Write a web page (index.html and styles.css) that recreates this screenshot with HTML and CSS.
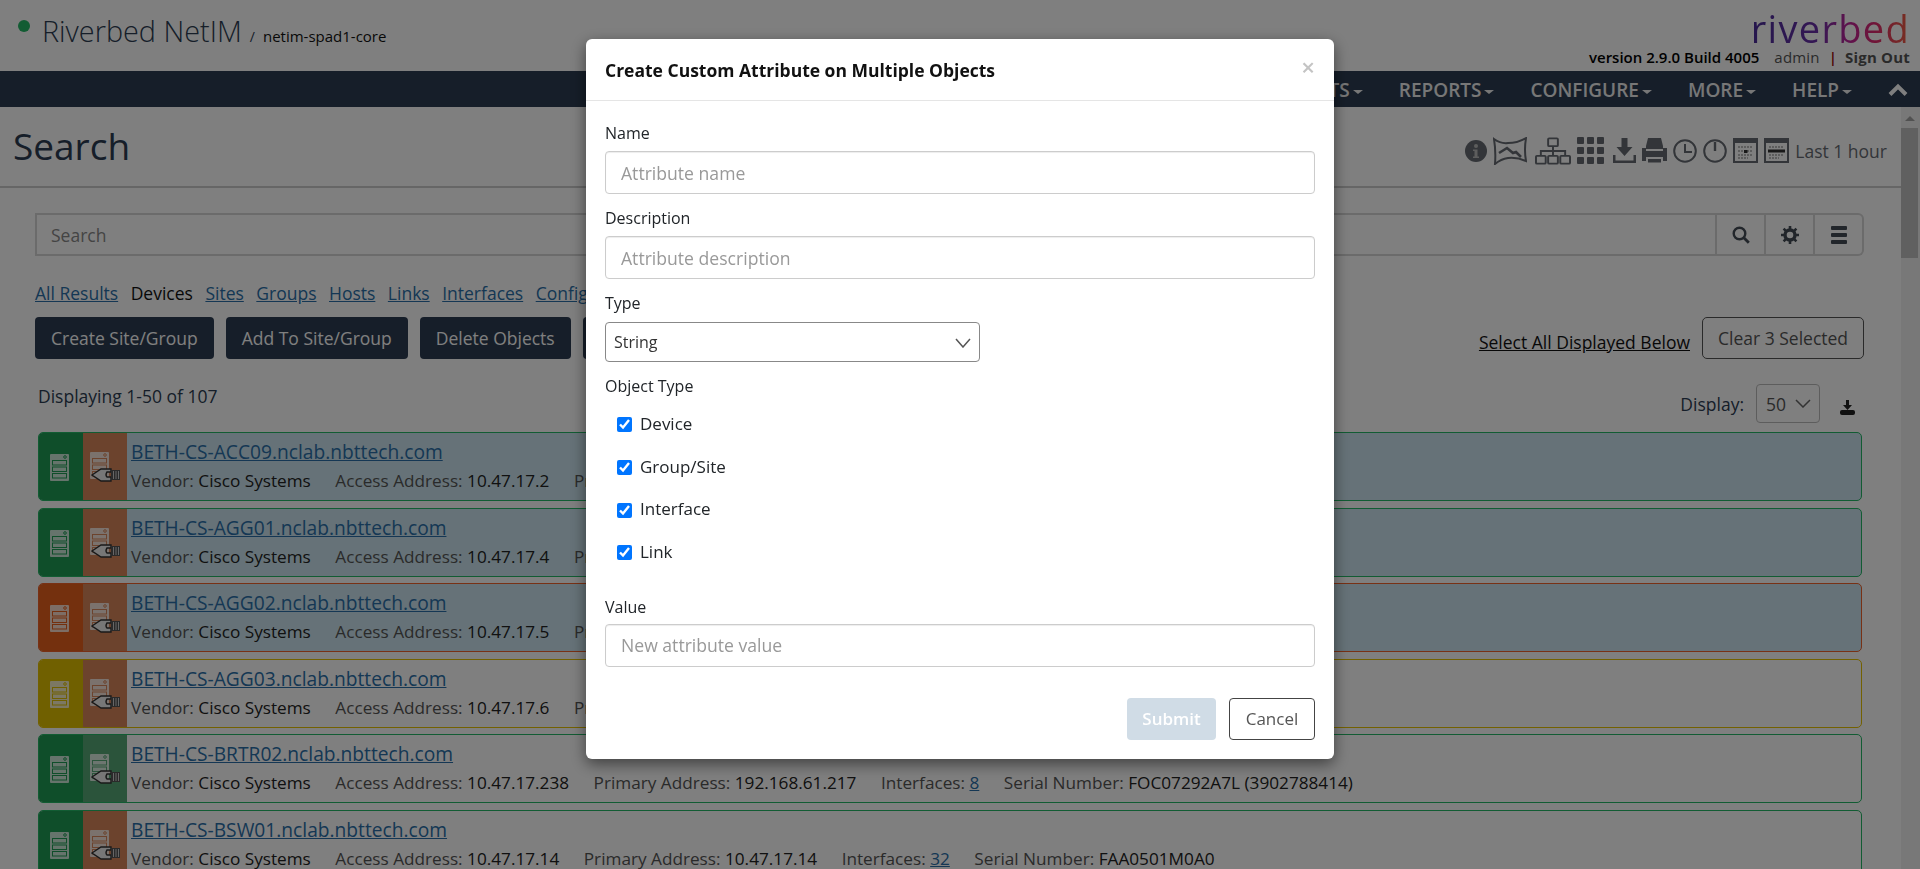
FILE: index.html
```html
<!DOCTYPE html>
<html lang="en">
<head>
    <meta charset="UTF-8">
    <title>Riverbed NetIM - Search</title>
    <link rel="stylesheet" href="styles.css">
</head>
<body>
    <svg class="sprites" width="0" height="0">
        <symbol id="server" viewBox="0 0 19 27">
            <rect width="19" height="27" rx="1" fill="#fff" fill-opacity=".78"/>
            <rect x="2.500" y="6.500" width="14" height="4.500" fill="none" stroke="currentColor"/>
            <rect x="2.500" y="13" width="14" height="4.500" fill="none" stroke="currentColor"/>
            <rect x="2.500" y="19.500" width="14" height="4.500" fill="none" stroke="currentColor"/>
            <circle cx="15" cy="3" r="1.300" fill="none" stroke="currentColor"/>
        </symbol>
        <symbol id="plug" viewBox="0 0 30 14">
            <path d="M1 7 L10 1 H20 V4 H16 Q14 7 16 9 H20 V13 H10 Z" fill="#eee" stroke="#333" stroke-width="1.400"/>
            <rect x="20" y="2" width="9" height="10" fill="#555"/>
            <path d="M22.500 3 V11 M25 3 V11 M27.500 3 V11" stroke="#ccc" stroke-width="1"/>
        </symbol>
    </svg>

    <header class="top-header">
        <div class="brand">
            <span class="status-dot"></span>
            <span class="brand-name">Riverbed NetIM</span>
            <span class="brand-sep">/</span>
            <span class="brand-host">netim-spad1-core</span>
        </div>
        <div class="user-box">
            <div class="logo">riverbed</div>
            <div class="user-line">
                <span class="version">version 2.9.0 Build 4005</span>
                <span class="user">admin</span>
                <span class="pipe">|</span>
                <a class="sign-out">Sign Out</a>
            </div>
        </div>
    </header>

    <nav class="main-nav">
        <a class="nav-item">ALERTS<i class="caret"></i></a>
        <a class="nav-item">REPORTS<i class="caret"></i></a>
        <a class="nav-item">CONFIGURE<i class="caret"></i></a>
        <a class="nav-item">MORE<i class="caret"></i></a>
        <a class="nav-item">HELP<i class="caret"></i></a>
        <svg class="nav-up" width="20" height="14" viewBox="0 0 20 14"><path d="M2 11.500 L10 3.500 L18 11.500" fill="none" stroke="#fff" stroke-width="4"/></svg>
    </nav>

    <div class="page-wrap">
        <main class="content">
            <div class="title-bar">
                <h1>Search</h1>
                <div class="tools">
                    <svg class="tool" width="22" height="22" viewBox="0 0 22 22"><circle cx="11" cy="11" r="11" fill="#666b72"/><circle cx="11" cy="6" r="2" fill="#bbb"/><path d="M8 9.500h4.500v7H14V18H8v-1.500h1.500V11H8z" fill="#bbb"/></svg>
                    <svg class="tool tool-map" width="34" height="28" viewBox="0 0 34 28"><path d="M1 2 Q8 7 15 6 Q24 6 33 1 Q31 13 33 24 Q24 20 15 21 Q8 22 2 27 Q3 14 1 2 Z" fill="none" stroke="#666b72" stroke-width="2"/><path d="M6 16 L14 11 L20 16 L23 15 L28 20" fill="none" stroke="#666b72" stroke-width="2.600"/></svg>
                    <svg class="tool" width="36" height="28" viewBox="0 0 37 28"><g fill="none" stroke="#666b72" stroke-width="2"><rect x="13.500" y="1" width="10" height="8" rx="1"/><rect x="1" y="19" width="10" height="8" rx="1"/><rect x="13.500" y="19" width="10" height="8" rx="1"/><rect x="26" y="19" width="10" height="8" rx="1"/><path d="M18.500 9v10M6 19v-5h25v5"/></g></svg>
                    <svg class="tool" width="27" height="27" viewBox="0 0 27 27"><g fill="#666b72"><rect width="7" height="7" rx="1"/><rect x="10" width="7" height="7" rx="1"/><rect x="20" width="7" height="7" rx="1"/><rect y="10" width="7" height="7" rx="1"/><rect x="10" y="10" width="7" height="7" rx="1"/><rect x="20" y="10" width="7" height="7" rx="1"/><rect y="20" width="7" height="7" rx="1"/><rect x="10" y="20" width="7" height="7" rx="1"/><rect x="20" y="20" width="7" height="7" rx="1"/></g></svg>
                    <svg class="tool tool-dl" width="23" height="25" viewBox="0 0 23 25"><path d="M8.500 0h6v9h5l-8 9-8-9h5z" fill="#666b72"/><path d="M0 17v8h23v-8h-2.500v5.500h-18V17z" fill="#666b72"/></svg>
                    <svg class="tool" width="25" height="25" viewBox="0 0 25 25"><path d="M6 0h13l2 8v3H4V8z" fill="#666b72"/><path d="M0 10h4v3h17v-3h4v13h-4v-4H4v4H0z" fill="#666b72"/><rect x="6" y="21" width="13" height="3.500" fill="#666b72"/></svg>
                    <svg class="tool" width="24" height="24" viewBox="0 0 24 24"><circle cx="12" cy="12" r="10.800" fill="none" stroke="#666b72" stroke-width="2"/><path d="M12 5v8h7" fill="none" stroke="#666b72" stroke-width="2"/></svg>
                    <svg class="tool" width="24" height="24" viewBox="0 0 24 24"><circle cx="12" cy="12" r="10.800" fill="none" stroke="#666b72" stroke-width="2"/><path d="M12 3v9" fill="none" stroke="#666b72" stroke-width="2.400"/></svg>
                    <svg class="tool" width="25" height="25" viewBox="0 0 25 25"><rect x="1" y="1" width="23" height="23" fill="none" stroke="#666b72" stroke-width="2"/><rect x="1" y="1" width="23" height="4" fill="#666b72"/><path d="M5 9h15M5 13h15M5 17h15M5 20h10" stroke="#bbb" stroke-width="2" stroke-dasharray="2 1"/><rect x="11" y="12" width="3.500" height="3" fill="#333"/></svg>
                    <svg class="tool" width="25" height="25" viewBox="0 0 25 25"><rect x="1" y="1" width="23" height="23" fill="none" stroke="#666b72" stroke-width="2"/><rect x="1" y="1" width="23" height="4" fill="#666b72"/><path d="M5 9h15M5 17h15M5 20h10" stroke="#bbb" stroke-width="2" stroke-dasharray="2 1"/><path d="M4 13h17" stroke="#333" stroke-width="3"/></svg>
                    <span class="time-range">Last 1 hour</span>
                </div>
            </div>

            <div class="section">
                <div class="search-bar">
                    <input class="search-input" type="text" placeholder="Search">
                    <button class="search-btn"><svg width="18" height="18" viewBox="0 0 18 18"><circle cx="7.500" cy="7.500" r="5.800" fill="none" stroke="#444c56" stroke-width="2.400"/><path d="M11.800 11.800 L16.800 16.800" stroke="#444c56" stroke-width="2.800"/></svg></button>
                    <button class="search-btn"><svg width="18" height="18" viewBox="0 0 18 18"><circle cx="9" cy="9" r="5" fill="none" stroke="#444c56" stroke-width="3.400"/><path d="M9 0v4M9 14v4M0 9h4M14 9h4M2.600 2.600l3 3M12.400 12.400l3 3M15.400 2.600l-3 3M5.600 12.400l-3 3" stroke="#444c56" stroke-width="2.600"/></svg></button>
                    <button class="search-btn"><svg width="16" height="18" viewBox="0 0 16 18"><rect width="16" height="4" rx="1" fill="#444c56"/><rect y="7" width="16" height="4" rx="1" fill="#444c56"/><rect y="14" width="16" height="4" rx="1" fill="#444c56"/></svg></button>
                </div>

                <div class="tabs">
                    <a class="tab-link">All Results</a>
                    <span>Devices</span>
                    <a class="tab-link">Sites</a>
                    <a class="tab-link">Groups</a>
                    <a class="tab-link">Hosts</a>
                    <a class="tab-link">Links</a>
                    <a class="tab-link">Interfaces</a>
                    <a class="tab-link">Config</a>
                </div>

                <div class="actions">
                    <button class="btn-dark">Create Site/Group</button>
                    <button class="btn-dark">Add To Site/Group</button>
                    <button class="btn-dark">Delete Objects</button>
                    <button class="btn-dark">Edit Objects</button>
                    <a class="select-all">Select All Displayed Below</a>
                    <button class="btn-clear">Clear 3 Selected</button>
                </div>

                <div class="list-head">
                    <span class="count">Displaying 1-50 of 107</span>
                    <span class="display-label">Display:</span>
                    <div class="display-select">50
                        <svg width="16" height="9" viewBox="0 0 16 9"><path d="M1 1 L8 8 L15 1" fill="none" stroke="#666" stroke-width="1.500"/></svg>
                    </div>
                    <svg class="list-download" width="15" height="15" viewBox="0 0 15 15"><path d="M6 0h3v5h3l-4.500 5L3 5h3z" fill="#222"/><rect y="10" width="15" height="5" rx="2" fill="#222"/></svg>
                </div>

                <div class="device-list">
                    <div class="device selected s-green">
                        <div class="cell c-main"><svg class="ico-server"><use href="#server"/></svg></div>
                        <div class="cell c-orange"><svg class="ico-server2"><use href="#server"/></svg><svg class="ico-plug"><use href="#plug"/></svg></div>
                        <div class="device-info">
                            <a class="device-name">BETH-CS-ACC09.nclab.nbttech.com</a>
                            <div class="device-meta"><span>Vendor: <b>Cisco Systems</b></span><span>Access Address: <b>10.47.17.2</b></span><span>Primary Address: <b>10.47.17.2</b></span></div>
                        </div>
                    </div>
                    <div class="device selected s-green">
                        <div class="cell c-main"><svg class="ico-server"><use href="#server"/></svg></div>
                        <div class="cell c-orange"><svg class="ico-server2"><use href="#server"/></svg><svg class="ico-plug"><use href="#plug"/></svg></div>
                        <div class="device-info">
                            <a class="device-name">BETH-CS-AGG01.nclab.nbttech.com</a>
                            <div class="device-meta"><span>Vendor: <b>Cisco Systems</b></span><span>Access Address: <b>10.47.17.4</b></span><span>Primary Address: <b>10.47.17.4</b></span></div>
                        </div>
                    </div>
                    <div class="device selected s-red">
                        <div class="cell c-main"><svg class="ico-server"><use href="#server"/></svg></div>
                        <div class="cell c-orange"><svg class="ico-server2"><use href="#server"/></svg><svg class="ico-plug"><use href="#plug"/></svg></div>
                        <div class="device-info">
                            <a class="device-name">BETH-CS-AGG02.nclab.nbttech.com</a>
                            <div class="device-meta"><span>Vendor: <b>Cisco Systems</b></span><span>Access Address: <b>10.47.17.5</b></span><span>Primary Address: <b>10.47.17.5</b></span></div>
                        </div>
                    </div>
                    <div class="device s-yellow">
                        <div class="cell c-main"><svg class="ico-server"><use href="#server"/></svg></div>
                        <div class="cell c-orange"><svg class="ico-server2"><use href="#server"/></svg><svg class="ico-plug"><use href="#plug"/></svg></div>
                        <div class="device-info">
                            <a class="device-name">BETH-CS-AGG03.nclab.nbttech.com</a>
                            <div class="device-meta"><span>Vendor: <b>Cisco Systems</b></span><span>Access Address: <b>10.47.17.6</b></span><span>Primary Address: <b>10.47.17.6</b></span></div>
                        </div>
                    </div>
                    <div class="device s-green">
                        <div class="cell c-main"><svg class="ico-server"><use href="#server"/></svg></div>
                        <div class="cell c-light-green"><svg class="ico-server2"><use href="#server"/></svg><svg class="ico-plug"><use href="#plug"/></svg></div>
                        <div class="device-info">
                            <a class="device-name">BETH-CS-BRTR02.nclab.nbttech.com</a>
                            <div class="device-meta"><span>Vendor: <b>Cisco Systems</b></span><span>Access Address: <b>10.47.17.238</b></span><span>Primary Address: <b>192.168.61.217</b></span><span>Interfaces: <a class="num-link">8</a></span><span>Serial Number: <b>FOC07292A7L (3902788414)</b></span></div>
                        </div>
                    </div>
                    <div class="device s-green">
                        <div class="cell c-main"><svg class="ico-server"><use href="#server"/></svg></div>
                        <div class="cell c-orange"><svg class="ico-server2"><use href="#server"/></svg><svg class="ico-plug"><use href="#plug"/></svg></div>
                        <div class="device-info">
                            <a class="device-name">BETH-CS-BSW01.nclab.nbttech.com</a>
                            <div class="device-meta"><span>Vendor: <b>Cisco Systems</b></span><span>Access Address: <b>10.47.17.14</b></span><span>Primary Address: <b>10.47.17.14</b></span><span>Interfaces: <a class="num-link">32</a></span><span>Serial Number: <b>FAA0501M0A0</b></span></div>
                        </div>
                    </div>
                </div>
            </div>
        </main>
        <div class="scrollbar">
            <i class="scroll-up"></i>
            <div class="scroll-thumb"></div>
        </div>
    </div>

    <div class="backdrop">
        <div class="modal">
            <div class="modal-header">
                <h2>Create Custom Attribute on Multiple Objects</h2>
                <span class="modal-close">×</span>
            </div>
            <div class="modal-body">
                <div class="form-group">
                    <label for="attr-name">Name</label>
                    <input id="attr-name" class="form-control" type="text" placeholder="Attribute name">
                </div>
                <div class="form-group">
                    <label for="attr-desc">Description</label>
                    <input id="attr-desc" class="form-control" type="text" placeholder="Attribute description">
                </div>
                <div class="form-group type-group">
                    <label for="attr-type">Type</label>
                    <div class="select-wrap">
                        <select id="attr-type" class="form-select"><option>String</option></select>
                        <svg class="select-arrow" width="16" height="10" viewBox="0 0 16 10"><path d="M1 1 L8 9 L15 1" fill="none" stroke="#555" stroke-width="1.500"/></svg>
                    </div>
                </div>
                <div class="form-group objects-group">
                    <label>Object Type</label>
                    <div class="check-list">
                        <label class="check"><input type="checkbox" checked> Device</label>
                        <label class="check"><input type="checkbox" checked> Group/Site</label>
                        <label class="check"><input type="checkbox" checked> Interface</label>
                        <label class="check"><input type="checkbox" checked> Link</label>
                    </div>
                </div>
                <div class="form-group value-group">
                    <label for="attr-value">Value</label>
                    <input id="attr-value" class="form-control" type="text" placeholder="New attribute value">
                </div>
                <div class="modal-footer">
                    <button class="btn-submit">Submit</button>
                    <button class="btn-cancel">Cancel</button>
                </div>
            </div>
        </div>
    </div>
</body>
</html>
```

FILE: styles.css
```css
* { margin: 0; padding: 0; box-sizing: border-box; }
html, body { height: 100%; overflow: hidden; }
body {
    font-family: "Open Sans", sans-serif;
    font-size: 17.5px;
    color: #2c3c52;
    background: #fff;
}
button, input, select { font-family: inherit; font-size: 17.5px; }
.sprites { position: absolute; }

/* header */
.top-header {
    height: 71px;
    display: flex;
    justify-content: space-between;
}
.brand {
    display: flex;
    align-items: baseline;
    padding: 11px 0 0 18px;
}
.status-dot {
    width: 12px;
    height: 12px;
    border-radius: 50%;
    background: #24b866;
    align-self: flex-start;
    margin: 9px 12px 0 0;
}
.brand-name { font-size: 28.800px; font-weight: 300; color: #2c3c52; }
.brand-sep { font-size: 14px; margin: 0 8px; }
.brand-host { font-size: 15px; color: #111; }
.user-box {
    display: flex;
    flex-direction: column;
    align-items: flex-end;
    padding-right: 10px;
}
.logo {
    font-size: 38px;
    font-weight: 500;
    line-height: 36px;
    height: 36px;
    margin-top: 10px;
    letter-spacing: 1.300px;
    background: linear-gradient(90deg, #4a2d9a 0%, #6a2fa8 42%, #c0259a 62%, #e02a70 78%, #f06040 100%);
    -webkit-background-clip: text;
    background-clip: text;
    color: transparent;
}
.user-line {
    font-size: 15px;
    line-height: 18px;
    margin-top: 2px;
    display: flex;
    gap: 12px;
}
.version { font-weight: 600; color: #000; margin-right: 3px; }
.user { color: #555; letter-spacing: .2px; margin-right: -3px; }
.pipe { color: #900; font-weight: 600; margin-right: -4px; }
.sign-out { font-weight: 700; color: #555; letter-spacing: .2px; }

/* nav */
.main-nav {
    height: 36px;
    background: #2c3c52;
    display: flex;
    align-items: center;
    justify-content: flex-end;
    padding: 1px 12px 0 0;
}
.nav-item {
    font-size: 19px;
    font-weight: 600;
    color: #eee;
    margin-right: 36px;
    display: flex;
    align-items: center;
}
.caret {
    border-top: 4px solid #eee;
    border-left: 5px solid transparent;
    border-right: 5px solid transparent;
    margin: 4px 0 0 3px;
}

/* page */
.page-wrap {
    display: flex;
    height: calc(100vh - 107px);
}
.content { flex: 1; overflow: hidden; }
.scrollbar {
    width: 19px;
    background: #f1f1f1;
    display: flex;
    flex-direction: column;
    padding-right: 2px;
}
.scroll-up {
    align-self: center;
    margin-top: 9px;
    border-bottom: 5px solid #a3a3a3;
    border-left: 5px solid transparent;
    border-right: 5px solid transparent;
}
.scroll-thumb { height: 130px; margin-top: 7px; background: #c1c1c1; }

.title-bar {
    height: 81px;
    border-bottom: 2px solid #ccc;
    display: flex;
    justify-content: space-between;
    align-items: center;
    padding: 0 14px 0 13px;
}
.title-bar h1 { font-size: 37px; font-weight: 400; color: #2c3c52; margin-top: -2px; }
.tools { display: flex; align-items: center; gap: 6px; margin-top: 8px; }
.tool-map { margin-right: 2px; }
.tool-dl { margin-left: 3.500px; }
.time-range { font-size: 17.500px; color: #666b72; white-space: nowrap; }

.section { padding: 25px 37px 0 35px; }
.search-bar { display: flex; height: 43px; }
.search-input {
    flex: 1;
    border: 2px solid #d6d6d6;
    padding: 0 14px;
    background: #fff;
    outline: none;
}
.search-input::placeholder { color: #888; }
.search-btn {
    width: 49px;
    background: #fff;
    border: 2px solid #d6d6d6;
    border-left: 0;
    display: flex;
    align-items: center;
    justify-content: center;
}
.search-btn:last-child { border-radius: 0 6px 6px 0; }

.tabs {
    display: flex;
    gap: 12.500px;
    margin-top: 25px;
    line-height: 24px;
    color: #111;
}
.tab-link { color: #2a6fa8; text-decoration: underline; }

.actions {
    display: flex;
    align-items: center;
    gap: 12px;
    margin-top: 12px;
}
.btn-dark {
    height: 42px;
    padding: 0 16px;
    background: #2c3c52;
    color: #fff;
    border: 0;
    border-radius: 4px;
    white-space: nowrap;
}
.select-all {
    margin-left: auto;
    color: #111;
    text-decoration: underline;
    padding-top: 7px;
}
.btn-clear {
    height: 42px;
    width: 162px;
    background: #fff;
    color: #555;
    border: 1px solid #555;
    border-radius: 5px;
}

.list-head {
    display: flex;
    align-items: center;
    padding-left: 3px;
    margin-top: 25px;
    height: 39px;
}
.count { margin-right: auto; margin-top: -16px; }
.display-label { margin-right: 12px; }
.display-select {
    width: 64px;
    height: 39px;
    border: 1px solid #bbb;
    border-radius: 4px;
    display: flex;
    align-items: center;
    justify-content: space-between;
    padding: 0 8px 0 9px;
    color: #555;
}
.list-download { margin: 8px 9px 0 20px; }

.device-list {
    display: flex;
    flex-direction: column;
    gap: 6.600px;
    margin: 9px 2px 0 3px;
}
.device {
    height: 69px;
    flex: none;
    display: flex;
    border: 1px solid;
    border-radius: 5px;
    overflow: hidden;
}
.selected { background: #cce5f0; }
.s-green { border-color: #24b866; }
.s-red { border-color: #f0622a; }
.s-yellow { border-color: #e6c200; }
.s-green .c-main { background: #1f9c55; color: #1f9c55; }
.s-red .c-main { background: #e8601c; color: #e8601c; }
.s-yellow .c-main { background: #e0c000; color: #e0c000; }
.cell {
    width: 44px;
    flex: none;
    position: relative;
}
.c-orange { background: #d9875a; color: #d9875a; }
.c-light-green { background: #57a877; color: #57a877; }
.ico-server {
    position: absolute;
    left: 11px;
    top: 21px;
    width: 19px;
    height: 27px;
}
.ico-server2 {
    position: absolute;
    left: 7px;
    top: 19px;
    width: 19px;
    height: 27px;
}
.ico-plug {
    position: absolute;
    left: 8px;
    top: 35px;
    width: 30px;
    height: 14px;
}
.device-info { padding: 5px 0 0 4px; min-width: 0; }
.device-name {
    display: block;
    font-size: 19.200px;
    line-height: 28px;
    color: #2a6fa8;
    text-decoration: underline;
    white-space: nowrap;
}
.device-meta {
    display: flex;
    gap: 24.500px;
    margin-top: 3px;
    line-height: 24px;
    font-size: 17.200px;
    color: #555;
    white-space: nowrap;
}
.device-meta b { font-weight: 400; color: #222; }
.num-link { color: #2a6fa8; text-decoration: underline; }

/* modal */
.backdrop {
    position: fixed;
    inset: 0;
    background: rgba(0, 0, 0, .5);
}
.modal {
    width: 748px;
    height: 720px;
    margin: 39px 0 0 586px;
    background: #fff;
    border-radius: 6px;
    box-shadow: 0 5px 15px rgba(0, 0, 0, .5);
}
.modal-header {
    height: 62px;
    border-bottom: 1px solid #e5e5e5;
    display: flex;
    align-items: center;
    justify-content: space-between;
    padding: 0 19px;
}
.modal-header h2 { font-size: 17.500px; font-weight: 700; color: #111; }
.modal-close { font-size: 24px; font-weight: 600; color: #c4c4c4; margin-top: -6px; }
.modal-body { padding: 20px 19px 0; }
.form-group { margin-bottom: 12px; }
.form-group > label {
    display: block;
    font-size: 16px;
    line-height: 24px;
    margin-bottom: 6px;
    color: #212529;
}
.form-control {
    display: block;
    width: 100%;
    height: 43px;
    padding: 0 15px;
    border: 1px solid #ccc;
    border-radius: 4px;
    box-shadow: inset 0 1px 1px rgba(0, 0, 0, .075);
    outline: none;
    font-size: 17.600px;
}
.form-control::placeholder { color: #999; }
.select-wrap { position: relative; width: 375px; margin-top: 7px; }
.form-select {
    display: block;
    width: 100%;
    height: 40px;
    padding: 0 8px;
    border: 1px solid #888;
    border-radius: 4px;
    background: #fff;
    color: #333;
    appearance: none;
    font-size: 16px;
}
.select-arrow { position: absolute; right: 9px; top: 16px; pointer-events: none; }
.objects-group > label { margin-bottom: 4px; }
.check-list { display: flex; flex-direction: column; margin-bottom: 22px; }
.check {
    height: 42.700px;
    display: flex;
    align-items: center;
    gap: 8px;
    padding-left: 12px;
    color: #212529;
    font-size: 17px;
}
.check input { width: 15px; height: 15px; margin: 3px 0 0; }
.value-group { margin-bottom: 31px; }
.value-group > label { margin-bottom: 5px; }
.modal-footer { display: flex; justify-content: flex-end; gap: 13px; }
.btn-submit {
    width: 89px;
    height: 42px;
    background: #d0dce6;
    color: #fff;
    border: 0;
    border-radius: 4px;
    font-weight: 600;
    font-size: 17px;
}
.btn-cancel {
    width: 86px;
    height: 42px;
    background: #fff;
    color: #555;
    border: 1px solid #444;
    border-radius: 4px;
    font-size: 17px;
}
```
